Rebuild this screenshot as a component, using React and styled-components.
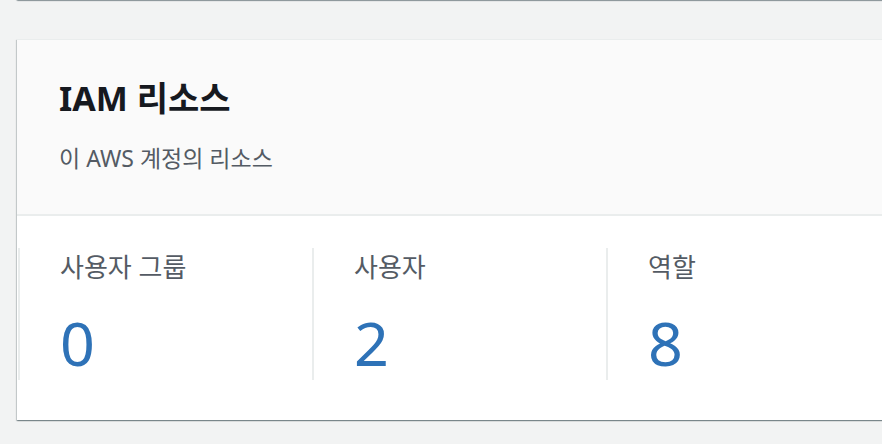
import React from 'react';
import styled, { createGlobalStyle } from 'styled-components';

const GlobalStyle = createGlobalStyle`
  html, body {
    margin: 0;
    padding: 0;
    background: #f2f3f3;
  }
  body {
    font-family: "Noto Sans", "Noto Sans CJK KR", sans-serif;
    overflow: hidden;
  }
`;

const Page = styled.div`
  width: 882px;
  height: 444px;
  padding-left: 17px;
  box-sizing: border-box;
  overflow: hidden;
`;

const cardShadow = `
  0 1px 1px 0 rgba(0, 28, 36, 0.3),
  1px 1px 1px 0 rgba(0, 28, 36, 0.15),
  -1px 1px 1px 0 rgba(0, 28, 36, 0.15)
`;

const PrevCard = styled.div`
  height: 1px;
  margin-top: -1px;
  width: 1000px;
  background: #ffffff;
  box-shadow: ${cardShadow};
`;

const Card = styled.section`
  margin-top: 39px;
  width: 1000px;
  background: #ffffff;
  box-shadow: ${cardShadow};
  border-top: 1px solid #eaeded;
`;

const Header = styled.header`
  background: #fafafa;
  border-bottom: 2px solid #eaeded;
  padding: 36px 42px 0;
  height: 176px;
  box-sizing: border-box;
`;

const Title = styled.h2`
  margin: 0;
  font-size: 34px;
  line-height: 44px;
  font-weight: 700;
  color: #16191f;
`;

const Description = styled.p`
  margin: 23px 0 0;
  font-size: 23px;
  line-height: 30px;
  color: #545b64;
`;

const Body = styled.div`
  display: grid;
  grid-template-columns: repeat(3, 294px);
  padding: 32px 0 40px 1px;
`;

const Column = styled.div`
  border-left: 2px solid #eaeded;
  padding: 3px 0 0 40px;
  height: 132px;
  box-sizing: border-box;
`;

const Label = styled.div`
  font-size: 26px;
  line-height: 32px;
  color: #545b64;
`;

const Count = styled.div`
  margin-top: 29px;
  font-size: 61px;
  line-height: 62px;
  color: #2e72b7;
`;

const resources = [
  { label: '사용자 그룹', count: 0 },
  { label: '사용자', count: 2 },
  { label: '역할', count: 8 }
];

const App = () => (
  <Page>
    <GlobalStyle />
    <PrevCard />
    <Card>
      <Header>
        <Title>IAM 리소스</Title>
        <Description>이 AWS 계정의 리소스</Description>
      </Header>
      <Body>
        {resources.map(item => (
          <Column key={item.label}>
            <Label>{item.label}</Label>
            <Count>{item.count}</Count>
          </Column>
        ))}
      </Body>
    </Card>
  </Page>
);

export default App;
